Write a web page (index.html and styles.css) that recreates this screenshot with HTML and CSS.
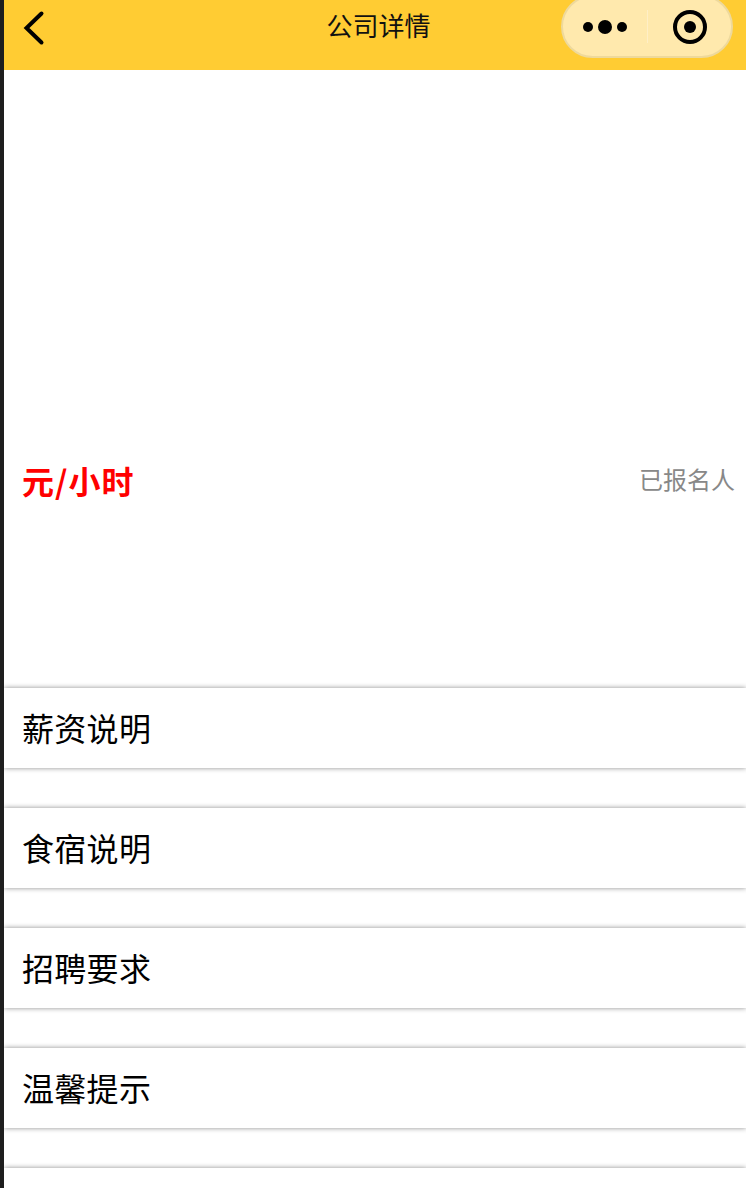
FILE: index.html
```html
<!DOCTYPE html>
<html lang="zh-CN">
<head>
    <meta charset="UTF-8">
    <meta name="viewport" content="width=device-width, initial-scale=1.0">
    <title>公司详情</title>
    <link rel="stylesheet" href="styles.css">
</head>
<body>
    <div class="page">
        <header class="navbar">
            <svg class="back-icon" xmlns="http://www.w3.org/2000/svg" viewBox="0 0 24 36">
                <path d="M19.5 3.5L4.5 18l15 14.5" fill="none" stroke="#000" stroke-width="4" stroke-linecap="round"/>
            </svg>
            <div class="nav-title">公司详情</div>
            <div class="capsule">
                <div class="capsule-btn">
                    <span class="dot"></span>
                    <span class="dot dot-big"></span>
                    <span class="dot"></span>
                </div>
                <div class="capsule-line"></div>
                <div class="capsule-btn">
                    <span class="target"><span class="target-dot"></span></span>
                </div>
            </div>
        </header>
        <div class="summary">
            <div class="price">元/小时</div>
            <div class="signed">已报名人</div>
        </div>
        <section class="info-row">薪资说明</section>
        <section class="info-row">食宿说明</section>
        <section class="info-row">招聘要求</section>
        <section class="info-row">温馨提示</section>
        <section class="info-row info-row-last"></section>
    </div>
</body>
</html>
```

FILE: styles.css
```css
html, body {
    margin: 0;
    padding: 0;
    height: 100%;
    overflow: hidden;
    background: #fff;
}
body {
    font-family: "Liberation Sans", "Noto Sans CJK SC", sans-serif;
    color: #000;
    border-left: 4px solid #1e1e1e;
    box-sizing: border-box;
}
.navbar {
    height: 70px;
    background: #ffcc33;
    display: flex;
    align-items: flex-start;
    justify-content: space-between;
    padding-left: 18px;
    padding-right: 13px;
    position: relative;
}
.back-icon {
    width: 24px;
    height: 36px;
    margin-top: 10px;
}
.nav-title {
    position: absolute;
    left: 7px;
    right: 0;
    top: 11px;
    text-align: center;
    font-size: 26px;
    line-height: 32px;
    color: #111;
}
.capsule {
    width: 172px;
    height: 63px;
    margin-top: -5px;
    box-sizing: border-box;
    border-radius: 32px;
    background: #ffe9ad;
    border: 2px solid #eed99c;
    display: flex;
    align-items: center;
    position: relative;
}
.capsule-btn {
    flex: 1;
    display: flex;
    align-items: center;
    justify-content: center;
    gap: 5px;
}
.capsule-line {
    width: 1px;
    height: 33px;
    background: #ffefc6;
}
.dot {
    width: 10px;
    height: 10px;
    border-radius: 50%;
    background: #000;
}
.dot-big {
    width: 14px;
    height: 14px;
}
.target {
    width: 34px;
    height: 34px;
    margin-left: 2px;
    box-sizing: border-box;
    border: 4px solid #000;
    border-radius: 50%;
    display: flex;
    align-items: center;
    justify-content: center;
}
.target-dot {
    width: 12px;
    height: 12px;
    border-radius: 50%;
    background: #000;
}
.summary {
    height: 618px;
    box-sizing: border-box;
    padding: 393px 11px 0 18px;
    display: flex;
    justify-content: space-between;
    align-items: flex-start;
}
.price {
    font-family: "Noto Sans CJK SC", sans-serif;
    font-size: 32px;
    font-weight: bold;
    line-height: 34px;
    letter-spacing: 1px;
    color: #ff0000;
}
.signed {
    font-size: 24px;
    line-height: 36px;
    color: #888;
}
.info-row {
    height: 80px;
    margin-bottom: 40px;
    padding-left: 18px;
    font-size: 32px;
    line-height: 84px;
    letter-spacing: 0.3px;
    background: #fff;
    box-shadow: 0 0 5px rgba(0, 0, 0, 0.45);
}
.info-row-last {
    height: 20px;
    margin-bottom: 0;
}
```
